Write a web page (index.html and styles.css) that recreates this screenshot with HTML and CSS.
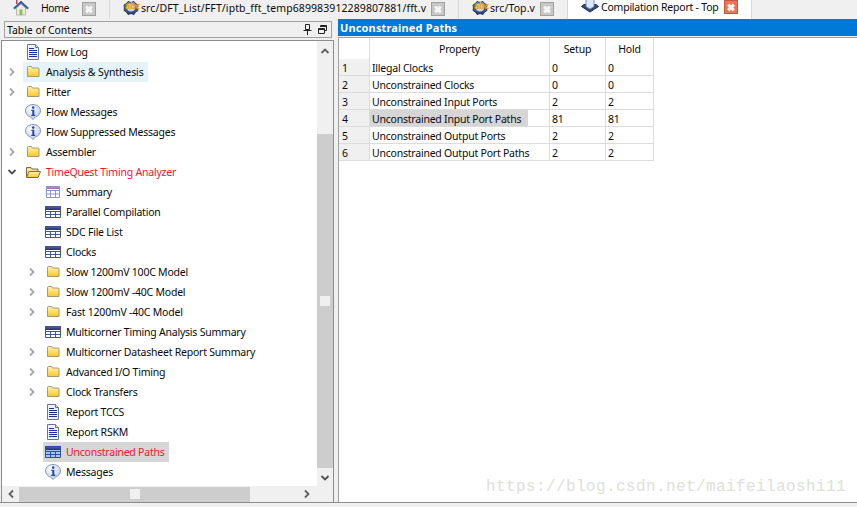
FILE: index.html
```html
<!DOCTYPE html>
<html lang="en">
<head>
<meta charset="utf-8">
<title>Compilation Report - Top</title>
<link rel="stylesheet" href="styles.css">
</head>
<body>
<svg class="defs" width="0" height="0" aria-hidden="true">
  <defs>
    <linearGradient id="fy" x1="0" y1="0" x2="0" y2="1"><stop offset="0" stop-color="#fff4b0"/><stop offset="1" stop-color="#fcc62a"/></linearGradient>
    <linearGradient id="bl" x1="0" y1="0" x2="0" y2="1"><stop offset="0" stop-color="#5a6cc0"/><stop offset="1" stop-color="#20306f"/></linearGradient>
    <linearGradient id="lil" x1="0" y1="0" x2="0" y2="1"><stop offset="0" stop-color="#c9a0d8"/><stop offset="1" stop-color="#9a6cb4"/></linearGradient>
    <linearGradient id="gear" x1="0" y1="0" x2="0" y2="1"><stop offset="0" stop-color="#8b9ccc"/><stop offset="1" stop-color="#27375f"/></linearGradient>
    <radialGradient id="bub" cx=".4" cy=".3" r=".8"><stop offset="0" stop-color="#fff"/><stop offset="1" stop-color="#b4c8e8"/></radialGradient>
    <symbol id="folder" viewBox="0 0 16 16"><path d="M2.500 3.500q0-1 1-1h3l1 1.500h5.500q1 0 1 1v7.500h-11.500z" fill="url(#fy)" stroke="#a39a6c"/></symbol>
    <symbol id="open" viewBox="0 0 16 16"><path d="M1.500 13V3.500h4.500l1 1.500h6v2.500" fill="#f4dfa0" stroke="#7c6c3c"/><path d="M1.500 13.500l2.500-6h11.500l-2.500 6z" fill="url(#fy)" stroke="#7c6c3c"/></symbol>
    <symbol id="doc" viewBox="0 0 16 16"><path d="M2.500.5h8l3 3v12h-11z" fill="#eef1fa" stroke="#6a7490"/><path d="M10.500.5v3h3" fill="#cfd6e8" stroke="#6a7490"/><path d="M4 4.500h5M4 6.500h8M4 8.500h8M4 10.500h8M4 12.500h8" stroke="#1f2f9a"/></symbol>
    <symbol id="info" viewBox="0 0 16 16"><path d="M8 .5c4 0 7.500 2.500 7.500 6.300 0 3-2.200 5.300-5 6L8 15.500l-2.500-2.700c-2.800-.7-5-3-5-6C.5 3 4 .5 8 .5z" fill="url(#bub)" stroke="#8295b4"/><circle cx="8.200" cy="3.600" r="1.300" fill="#2a46b0"/><path d="M6.300 5.800h3v5h1v1.200H6.300v-1.200h1v-3.800h-1z" fill="#2a46b0"/></symbol>
    <symbol id="table" viewBox="0 0 16 16"><path d="M0 2h16v12H0z" fill="#fff"/><path d="M0 2h16v4H0z" fill="url(#bl)"/><path d="M.5 2.500h15v11H.5zM.5 7.500h15M.5 10.500h15M5.500 7v7M10.500 7v7" fill="none" stroke="#46548a"/></symbol>
    <symbol id="tablesel" viewBox="0 0 16 16"><path d="M0 2h16v12H0z" fill="#a8c4e8"/><path d="M0 2h16v4H0z" fill="url(#bl)"/><path d="M.5 2.500h15v11H.5zM.5 7.500h15M.5 10.500h15M5.500 7v7M10.500 7v7" fill="none" stroke="#2f4fa0"/></symbol>
    <symbol id="tablelilac" viewBox="0 0 16 16"><path d="M1 2h14v12H1z" fill="#fff"/><path d="M1 2h14v3H1z" fill="url(#lil)"/><path d="M1.500 2.500h13v11h-13zM1.500 6.500h13M1.500 10h13M5.500 6v8M10.500 6v8" fill="none" stroke="#8d95bd"/></symbol>
    <symbol id="right" viewBox="0 0 10 10"><path d="M3 1.500 6.500 5 3 8.500" fill="none" stroke="#a8a8a8" stroke-width="1.800"/></symbol>
    <symbol id="down" viewBox="0 0 10 10"><path d="M1.500 3 5 6.500 8.500 3" fill="none" stroke="#505050" stroke-width="1.800"/></symbol>
    <symbol id="abc" viewBox="0 0 18 16"><path d="M6 1.500 9 2.500 12 1.500 13.500 3.500 16 5 15.500 8 16 10.500 13.500 12 12 14.500 9 13.500 6 14.500 4.500 12 2 10.500 2.500 8 2 5 4.500 3.500z" fill="url(#gear)" stroke="#27375f"/><circle cx="9" cy="7.500" r="4" fill="#c8d4ec"/></symbol>
    <symbol id="report" viewBox="0 0 18 16"><path d="M.5 7.500 9 13l8.500-5.500-2.500-2H3z" fill="#33477c" stroke="#1f2f58"/><path d="M5 .5h8v7l-4 2.500-4-2.500z" fill="#dfe8f8" stroke="#7a8fb8"/></symbol>
  </defs>
</svg>

<nav class="tabs">
  <div class="tab tab-home">
    <svg class="ic-home" viewBox="0 0 16 16" width="16" height="16"><path d="M3 0h1.500v4H3z" fill="#b04a4a"/><path d="M.5 8 8 1l7.500 7-1.200 1L8 3.500 1.700 9z" fill="#2f5cb8" stroke="#1f3f80" stroke-width=".5"/><path d="M3.500 8 8 4l4.500 4v7h-9z" fill="#f0ead6" stroke="#8a8068" stroke-width=".5"/><path d="M6.500 9.500h3V15h-3z" fill="#7cc06a"/></svg>
    <span class="tab-label">Home</span>
    <span class="close"></span>
  </div>
  <div class="tab tab-fft">
    <svg class="ic-tab" width="18" height="16"><use href="#abc"/></svg>
    <span class="abc">abc</span>
    <span class="tab-label">src/DFT_List/FFT/iptb_fft_temp689983912289807881/fft.v</span>
    <span class="close"></span>
  </div>
  <div class="tab tab-top">
    <svg class="ic-tab" width="18" height="16"><use href="#abc"/></svg>
    <span class="abc">abc</span>
    <span class="tab-label">src/Top.v</span>
    <span class="close"></span>
  </div>
  <div class="tab tab-active">
    <svg class="ic-tab" width="18" height="16"><use href="#report"/></svg>
    <span class="tab-label">Compilation Report - Top</span>
    <span class="close close-red"></span>
  </div>
</nav>

<main class="main">
  <section class="left">
    <header class="toc-head">
      <span>Table of Contents</span>
      <span class="toc-tools">
        <svg width="9" height="11" viewBox="0 0 9 11"><path d="M2.500.5h4v5h-4zM.5 6.500h8M4.500 6.500V11" fill="none" stroke="#222"/></svg>
        <svg width="9" height="9" viewBox="0 0 9 9"><path d="M2.500 2V.5h6v5H7M.5 3.500h6v5h-6z" fill="none" stroke="#222"/><path d="M2.500 1.500h6M.5 4.500h6" stroke="#222"/></svg>
      </span>
    </header>
    <div class="tree">
      <ul class="rows">
        <li class="row l0"><span class="exp"></span><svg class="ic"><use href="#doc"/></svg><span class="t">Flow Log</span></li>
        <li class="row l0"><span class="exp"><svg width="10" height="10"><use href="#right"/></svg></span><span class="hl hl-blue"><svg class="ic"><use href="#folder"/></svg><span class="t">Analysis &amp; Synthesis</span></span></li>
        <li class="row l0"><span class="exp"><svg width="10" height="10"><use href="#right"/></svg></span><svg class="ic"><use href="#folder"/></svg><span class="t">Fitter</span></li>
        <li class="row l0"><span class="exp"></span><svg class="ic"><use href="#info"/></svg><span class="t">Flow Messages</span></li>
        <li class="row l0"><span class="exp"></span><svg class="ic"><use href="#info"/></svg><span class="t">Flow Suppressed Messages</span></li>
        <li class="row l0"><span class="exp"><svg width="10" height="10"><use href="#right"/></svg></span><svg class="ic"><use href="#folder"/></svg><span class="t">Assembler</span></li>
        <li class="row l0"><span class="exp"><svg width="10" height="10"><use href="#down"/></svg></span><svg class="ic"><use href="#open"/></svg><span class="t red">TimeQuest Timing Analyzer</span></li>
        <li class="row l1"><span class="exp"></span><svg class="ic"><use href="#tablelilac"/></svg><span class="t">Summary</span></li>
        <li class="row l1"><span class="exp"></span><svg class="ic"><use href="#table"/></svg><span class="t">Parallel Compilation</span></li>
        <li class="row l1"><span class="exp"></span><svg class="ic"><use href="#table"/></svg><span class="t">SDC File List</span></li>
        <li class="row l1"><span class="exp"></span><svg class="ic"><use href="#table"/></svg><span class="t">Clocks</span></li>
        <li class="row l1"><span class="exp"><svg width="10" height="10"><use href="#right"/></svg></span><svg class="ic"><use href="#folder"/></svg><span class="t">Slow 1200mV 100C Model</span></li>
        <li class="row l1"><span class="exp"><svg width="10" height="10"><use href="#right"/></svg></span><svg class="ic"><use href="#folder"/></svg><span class="t">Slow 1200mV -40C Model</span></li>
        <li class="row l1"><span class="exp"><svg width="10" height="10"><use href="#right"/></svg></span><svg class="ic"><use href="#folder"/></svg><span class="t">Fast 1200mV -40C Model</span></li>
        <li class="row l1"><span class="exp"></span><svg class="ic"><use href="#table"/></svg><span class="t">Multicorner Timing Analysis Summary</span></li>
        <li class="row l1"><span class="exp"><svg width="10" height="10"><use href="#right"/></svg></span><svg class="ic"><use href="#folder"/></svg><span class="t">Multicorner Datasheet Report Summary</span></li>
        <li class="row l1"><span class="exp"><svg width="10" height="10"><use href="#right"/></svg></span><svg class="ic"><use href="#folder"/></svg><span class="t">Advanced I/O Timing</span></li>
        <li class="row l1"><span class="exp"><svg width="10" height="10"><use href="#right"/></svg></span><svg class="ic"><use href="#folder"/></svg><span class="t">Clock Transfers</span></li>
        <li class="row l1"><span class="exp"></span><svg class="ic"><use href="#doc"/></svg><span class="t">Report TCCS</span></li>
        <li class="row l1"><span class="exp"></span><svg class="ic"><use href="#doc"/></svg><span class="t">Report RSKM</span></li>
        <li class="row l1"><span class="exp"></span><span class="hl hl-gray"><svg class="ic"><use href="#tablesel"/></svg><span class="t red">Unconstrained Paths</span></span></li>
        <li class="row l1"><span class="exp"></span><svg class="ic"><use href="#info"/></svg><span class="t">Messages</span></li>
      </ul>
      <div class="vbar">
        <svg class="arrow" width="10" height="10" viewBox="0 0 10 10"><path d="M1.500 7 5 3.500 8.500 7" fill="none" stroke="#606060" stroke-width="1.800"/></svg>
        <div class="vthumb"><span class="grip"></span></div>
        <svg class="arrow" width="10" height="10"><use href="#down"/></svg>
      </div>
      <div class="hbar">
        <svg class="arrow" width="10" height="10" viewBox="0 0 10 10"><path d="M7 1.500 3.500 5 7 8.500" fill="none" stroke="#606060" stroke-width="1.800"/></svg>
        <div class="htrack"><div class="hthumb"><span class="grip"></span></div></div>
        <svg class="arrow" width="10" height="10" viewBox="0 0 10 10"><path d="M3 1.500 6.500 5 3 8.500" fill="none" stroke="#606060" stroke-width="1.800"/></svg>
      </div>
      <div class="corner"></div>
    </div>
  </section>

  <section class="right">
    <h1 class="title">Unconstrained Paths</h1>
    <div class="report">
      <table class="grid">
        <thead>
          <tr><th class="num"></th><th class="prop">Property</th><th class="val1">Setup</th><th class="val2">Hold</th></tr>
        </thead>
        <tbody>
          <tr><td class="num">1</td><td>Illegal Clocks</td><td>0</td><td>0</td></tr>
          <tr><td class="num">2</td><td>Unconstrained Clocks</td><td>0</td><td>0</td></tr>
          <tr><td class="num">3</td><td>Unconstrained Input Ports</td><td>2</td><td>2</td></tr>
          <tr><td class="num">4</td><td class="selcell"><span class="cellsel">Unconstrained Input Port Paths</span></td><td>81</td><td>81</td></tr>
          <tr><td class="num">5</td><td>Unconstrained Output Ports</td><td>2</td><td>2</td></tr>
          <tr><td class="num">6</td><td>Unconstrained Output Port Paths</td><td>2</td><td>2</td></tr>
        </tbody>
      </table>
    </div>
  </section>
</main>
<div class="watermark">https://blog.csdn.net/maifeilaoshi11</div>
</body>
</html>
```

FILE: styles.css
```css
* { box-sizing: border-box; }
html, body { margin: 0; padding: 0; }
body {
  position: relative;
  width: 857px;
  height: 507px;
  overflow: hidden;
  background: #f0f0f0;
  font-family: "Noto Sans", "Open Sans", sans-serif;
  font-size: 10.5px;
  letter-spacing: -.22px;
  line-height: 14px;
  color: #0a0a0a;
  display: flex;
  flex-direction: column;
}
.defs { position: absolute; }

/* tabs */
.tabs { display: flex; height: 19px; flex: none; }
.tab { position: relative; display: flex; align-items: flex-start; height: 19px; padding-right: 13px; border-right: 1px solid #d8d8d8; }
.tab-home { width: 110px; padding-left: 13px; }
.ic-home { flex: none; margin-top: 0; }
.tab-home .tab-label { margin-left: 12px; letter-spacing: -.5px; }
.tab-fft { width: 349px; padding-left: 12px; }
.tab-top { width: 109px; padding-left: 12px; }
.tab-active { width: 184px; padding-left: 13px; background: #fff; }
.tab-fft .tab-label, .tab-top .tab-label { margin-left: 1px; letter-spacing: .09px; }
.tab-active .tab-label { margin-left: 2px; margin-top: 0; }
.tab-label { white-space: nowrap; margin-top: 1px; }
.ic-tab { flex: none; }
.tab-active .ic-tab { margin-top: -1px; }
.abc { position: absolute; top: 0; font-size: 9px; font-weight: 700; letter-spacing: -.3px; color: #eca21c; line-height: 11px; }
.tab-fft .abc { left: 15px; }
.tab-top .abc { left: 15px; }
.close {
  flex: none;
  position: relative;
  width: 14px;
  height: 14px;
  margin-left: auto;
  margin-top: 2px;
  background: #c8c8c8;
  border: 1px solid #a0a0a0;
}
.close::before, .close::after {
  content: "";
  position: absolute;
  left: 2px;
  top: 4.5px;
  width: 8px;
  height: 3px;
  background: #f6f6f6;
}
.close::before { transform: rotate(45deg); }
.close::after { transform: rotate(-45deg); }
.close-red { background: #ee7552; border-color: #c8563c; margin-top: 0; }

/* main */
.main { display: flex; flex: none; height: 484px; border-bottom: 1px solid #8c8ca0; }

/* left */
.left { width: 336px; flex: none; display: flex; flex-direction: column; padding-top: 2px; }
.toc-head {
  margin-left: 4px;
  width: 328px;
  height: 17px;
  flex: none;
  border: 1px solid #a0a0a0;
  display: flex;
  align-items: center;
  justify-content: space-between;
  padding: 0 1px 0 2px;
  letter-spacing: -.05px;
}
.toc-tools { display: flex; align-items: center; gap: 6px; padding-right: 3px; }
.tree {
  margin: 2px 0 0 1px;
  width: 333px;
  height: 463px;
  flex: none;
  border: 1px solid #8c8c8c;
  display: grid;
  grid-template-columns: 1fr 16px;
  grid-template-rows: 1fr 16px;
  background: #fff;
}
.rows { list-style: none; margin: 0; padding: 1px 0 0; overflow: hidden; }
.row { display: flex; align-items: center; height: 20px; white-space: nowrap; }
.l0 { padding-left: 5px; }
.l1 { padding-left: 25px; }
.exp { flex: none; width: 12px; height: 10px; margin-right: 6px; display: block; }
.exp svg { display: block; }
.ic { flex: none; width: 16px; height: 16px; }
.t { margin-left: 5px; }
.red { color: #f0142d; }
.hl { display: flex; align-items: center; height: 20px; margin-left: -2px; padding-left: 2px; padding-right: 4px; }
.hl-blue { background: #e5f3fb; letter-spacing: -.1px; }
.hl-gray { background: #d6d6d6; }

/* scrollbars */
.vbar { grid-column: 2; grid-row: 1; background: #f0f0f0; display: flex; flex-direction: column; align-items: center; padding: 5px 0 3px; }
.vthumb { width: 16px; height: 334px; margin-top: 78px; margin-bottom: auto; background: #cdcdcd; display: flex; align-items: center; justify-content: center; }
.hbar { grid-column: 1; grid-row: 2; background: #f0f0f0; display: flex; align-items: center; padding: 0 5px 0 4px; }
.htrack { flex: 1; display: flex; height: 15px; padding-left: 3px; }
.hthumb { width: 231px; height: 15px; background: #cdcdcd; display: flex; align-items: center; justify-content: center; }
.grip { display: block; width: 10px; height: 10px; background: #f0f0f0; }
.corner { grid-column: 2; grid-row: 2; background: #f0f0f0; }
.arrow { flex: none; display: block; }

/* right */
.right { flex: 1; display: flex; flex-direction: column; padding-left: 2px; }
.title {
  margin: 0;
  height: 17px;
  flex: none;
  background: #0078d7;
  color: #fff;
  font: 700 11px/17px "Noto Sans", sans-serif;
  letter-spacing: .15px;
  padding-left: 2px;
}
.report { flex: 1; margin-top: 1px; background: #fff; border-left: 1px solid #a0a0a0; border-top: 1px solid #a0a0a0; }
.grid { border-collapse: separate; border-spacing: 0; table-layout: fixed; width: 315px; }
.grid th { height: 21px; font-weight: 400; border-right: 1px solid #dcdcdc; padding: 0; background: #fff; }
.grid td { height: 17px; padding: 1px 0 0 2px; border-right: 1px solid #dcdcdc; border-bottom: 1px solid #dcdcdc; white-space: nowrap; }
.grid th.num { width: 31px; }
.grid th.prop { width: 180px; }
.grid th.val1 { width: 56px; }
.grid th.val2 { width: 48px; }
.grid td.num { background: #f0f0f0; padding-left: 3px; }
.grid td.selcell { padding: 0; }
.cellsel { display: block; padding: 1px 0 0 2px; width: 158px; background: #d6d6d6; height: 16px; line-height: 16px; }

/* watermark */
.watermark {
  position: absolute;
  left: 486px;
  top: 478px;
  font-family: "Liberation Mono", monospace;
  font-size: 16px;
  letter-spacing: .4px;
  line-height: 18px;
  color: #e0e0da;
  white-space: nowrap;
}
```
